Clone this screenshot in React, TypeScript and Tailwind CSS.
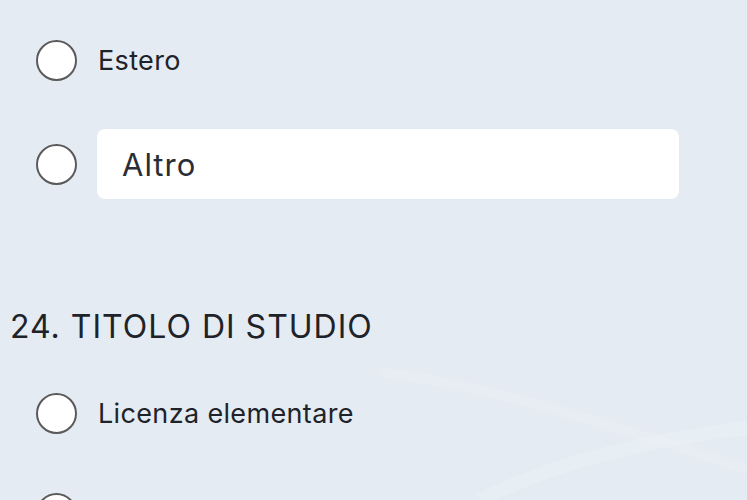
import React from "react";

const font = { fontFamily: "Inter, 'Noto Sans', sans-serif" };

const Radio = () => (
  <div className="h-[41px] w-[41px] shrink-0 rounded-full border-2 border-[#5a5a5a] bg-white" />
);

const Option = ({ label }: { label: string }) => (
  <div className="flex h-[41px] items-center pl-[36px]">
    <Radio />
    <span className="ml-[21px] text-[27px] leading-none tracking-[0.35px] text-[#1f2329]">{label}</span>
  </div>
);

export default function App() {
  return (
    <div className="relative h-[500px] w-[747px] overflow-hidden bg-[#e4ebf2]" style={font}>
      {/* soft background waves */}
      <svg className="absolute inset-0 h-full w-full" viewBox="0 0 747 500" preserveAspectRatio="none">
        <path d="M380 372 C 480 385, 600 420, 747 470" fill="none" stroke="#ebf0f5" strokeWidth="10" opacity="0.45" />
        <path d="M480 500 C 560 460, 650 440, 747 428" fill="none" stroke="#ecf1f6" strokeWidth="14" opacity="0.45" />
      </svg>

      <div className="relative flex flex-col pt-[40px]">
        <Option label="Estero" />

        <div className="mt-[48px] flex h-[70px] items-center pl-[36px]">
          <Radio />
          <div className="ml-[20px] flex h-[70px] w-[582px] items-center rounded-[8px] bg-white pl-[25px]">
            <span className="text-[31px] leading-none tracking-[1px] text-[#2a2d33]">Altro</span>
          </div>
        </div>

        <h2 className="mt-[108px] h-[40px] pl-[10px] text-[32px] leading-[40px] font-normal tracking-[1px] text-[#1f2329]">
          24. TITOLO DI STUDIO
        </h2>

        <div className="mt-[46px]">
          <Option label="Licenza elementare" />
        </div>

        <div className="mt-[59px]">
          <Option label="Licenza media" />
        </div>
      </div>
    </div>
  );
}
